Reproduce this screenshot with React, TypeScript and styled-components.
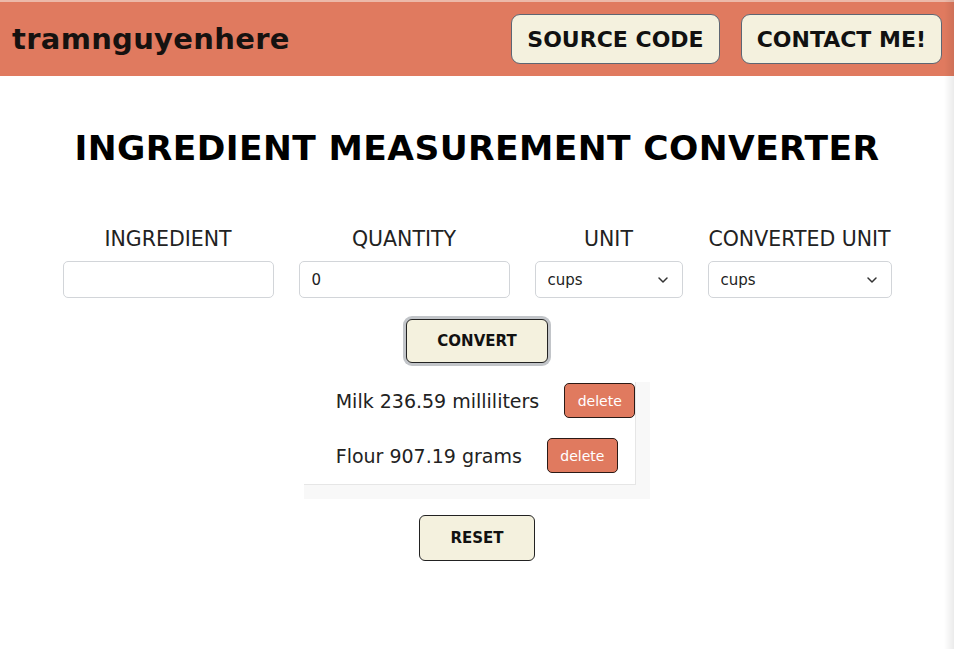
import styled, { createGlobalStyle } from "styled-components";

const GlobalStyle = createGlobalStyle`
  html, body {
    margin: 0;
    padding: 0;
    background: #ffffff;
    font-family: "DejaVu Sans", "Open Sans", sans-serif;
    color: #1f1f1f;
  }
  * {
    box-sizing: border-box;
  }
`;

const Page = styled.div`
  min-height: 649px;
  position: relative;
  overflow: hidden;
`;

const EdgeShade = styled.div`
  position: absolute;
  top: 0;
  right: 0;
  width: 10px;
  height: 100%;
  background: linear-gradient(to right, rgba(0, 0, 0, 0), rgba(0, 0, 0, 0.08));
  pointer-events: none;
`;

const Header = styled.header`
  height: 76px;
  background: #e07a5f;
  border-top: 2px solid #ecb9a9;
  display: flex;
  align-items: center;
  justify-content: space-between;
  padding: 0 12px;
`;

const Logo = styled.div`
  font-size: 29px;
  font-weight: 700;
  color: #161210;
  letter-spacing: 0.3px;
`;

const NavButtons = styled.div`
  display: flex;
  gap: 21px;
`;

const NavButton = styled.button`
  height: 50px;
  padding: 0 15px;
  background: #f4f1de;
  border: 1px solid #5d6673;
  border-radius: 9px;
  font-family: inherit;
  font-size: 22px;
  font-weight: 700;
  color: #111;
  cursor: pointer;
`;

const Main = styled.main`
  display: flex;
  flex-direction: column;
  align-items: center;
`;

const Title = styled.h1`
  margin: 52px 0 59px;
  font-size: 34.5px;
  font-weight: 900;
  color: #000;
  letter-spacing: 0.4px;
`;

const Fields = styled.div`
  display: flex;
  gap: 25px;
  justify-content: center;
`;

const Field = styled.label`
  display: flex;
  flex-direction: column;
  align-items: center;
  gap: 10px;
`;

const FieldLabel = styled.span`
  font-size: 20.5px;
  font-weight: 400;
  color: #222;
  text-transform: uppercase;
`;

const TextInput = styled.input<{ $w: number }>`
  width: ${(p) => p.$w}px;
  height: 37px;
  padding: 0 12px;
  border: 1px solid #d2d5d9;
  border-radius: 5px;
  font-family: inherit;
  font-size: 15px;
  color: #222;
  background: #fff;
  outline: none;
`;

const SelectWrap = styled.div<{ $w: number }>`
  position: relative;
  width: ${(p) => p.$w}px;
  height: 37px;
`;

const Select = styled.select`
  appearance: none;
  width: 100%;
  height: 100%;
  padding: 0 12px;
  border: 1px solid #d2d5d9;
  border-radius: 5px;
  font-family: inherit;
  font-size: 15px;
  color: #222;
  background: #fff;
  outline: none;
`;

const Chevron = styled.svg`
  position: absolute;
  right: 14px;
  top: 13px;
  width: 12px;
  height: 12px;
  pointer-events: none;
`;

const ActionButton = styled.button<{ $focused?: boolean }>`
  background: #f4f1de;
  border: 1px solid #222;
  border-radius: 6px;
  font-family: inherit;
  font-size: 15px;
  font-weight: 700;
  color: #111;
  cursor: pointer;
  box-shadow: ${(p) => (p.$focused ? "0 0 0 3px #c2c5c9" : "none")};
`;

const ConvertButton = styled(ActionButton)`
  width: 142px;
  height: 44px;
  margin-top: 21px;
`;

const ResetButton = styled(ActionButton)`
  width: 116px;
  height: 46px;
  margin-top: 16px;
`;

const ListFrame = styled.div`
  margin-top: 19px;
  background: #f8f8f8;
  padding: 0 14px 14px 0;
`;

const List = styled.ul`
  margin: 0;
  padding: 1px 0 11px 32px;
  list-style: none;
  display: flex;
  flex-direction: column;
  gap: 20px;
  background: #fff;
  border-right: 1px solid #e6e6e6;
  border-bottom: 1px solid #e6e6e6;
`;

const Row = styled.li`
  display: flex;
  align-items: center;
  height: 35px;
`;

const RowText = styled.span`
  font-size: 19px;
  color: #222;
`;

const DeleteButton = styled.button`
  margin-left: 25px;
  width: 71px;
  height: 35px;
  background: #e07a5f;
  border: 1px solid #2a1a16;
  border-radius: 5px;
  font-family: inherit;
  font-size: 14px;
  color: #fff;
  cursor: pointer;
`;

const items = [
  { id: 1, text: "Milk 236.59 milliliters" },
  { id: 2, text: "Flour 907.19 grams" },
];

const ChevronIcon = () => (
  <Chevron viewBox="0 0 12 12">
    <path d="M2 4l4 4 4-4" fill="none" stroke="#333" strokeWidth="1.5" strokeLinecap="round" strokeLinejoin="round" />
  </Chevron>
);

export default function App() {
  return (
    <Page>
      <GlobalStyle />
      <Header>
        <Logo>tramnguyenhere</Logo>
        <NavButtons>
          <NavButton>SOURCE CODE</NavButton>
          <NavButton>CONTACT ME!</NavButton>
        </NavButtons>
      </Header>
      <Main>
        <Title>INGREDIENT MEASUREMENT CONVERTER</Title>
        <Fields>
          <Field>
            <FieldLabel>Ingredient</FieldLabel>
            <TextInput $w={211} type="text" defaultValue="" />
          </Field>
          <Field>
            <FieldLabel>Quantity</FieldLabel>
            <TextInput $w={211} type="text" defaultValue="0" />
          </Field>
          <Field>
            <FieldLabel>Unit</FieldLabel>
            <SelectWrap $w={148}>
              <Select defaultValue="cups">
                <option value="cups">cups</option>
                <option value="grams">grams</option>
                <option value="milliliters">milliliters</option>
              </Select>
              <ChevronIcon />
            </SelectWrap>
          </Field>
          <Field>
            <FieldLabel>Converted Unit</FieldLabel>
            <SelectWrap $w={184}>
              <Select defaultValue="cups">
                <option value="cups">cups</option>
                <option value="grams">grams</option>
                <option value="milliliters">milliliters</option>
              </Select>
              <ChevronIcon />
            </SelectWrap>
          </Field>
        </Fields>
        <ConvertButton $focused>CONVERT</ConvertButton>
        <ListFrame>
          <List>
            {items.map((it) => (
              <Row key={it.id}>
                <RowText>{it.text}</RowText>
                <DeleteButton>delete</DeleteButton>
              </Row>
            ))}
          </List>
        </ListFrame>
        <ResetButton>RESET</ResetButton>
      </Main>
      <EdgeShade />
    </Page>
  );
}
